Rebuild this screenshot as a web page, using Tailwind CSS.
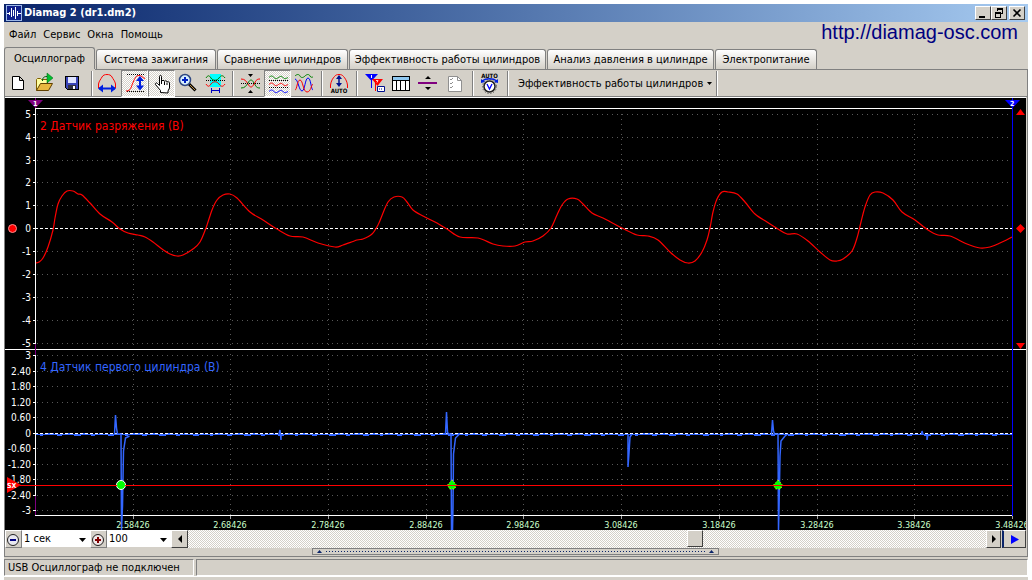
<!DOCTYPE html>
<html lang="ru">
<head>
    <meta charset="UTF-8">
    <meta name="viewport" content="width=device-width, initial-scale=1.0">
    <title>Diamag 2 (dr1.dm2)</title>
    <script src="https://cdn.jsdelivr.net/npm/@tailwindcss/browser@4"></script>
</head>
<body class="bg-white pt-1 text-[11px] leading-[14px] text-black font-['DejaVu_Sans_Condensed','DejaVu_Sans',sans-serif]">

    <div class="mx-1 bg-[#d4d0c8]">

        <!-- Title bar -->
        <header class="flex h-[18px] items-center bg-linear-to-r from-[#0a246a] to-[#a6caf0] pl-0.5 pr-[3px]">
            <svg class="size-4" viewBox="0 0 16 16" fill="none">
                <rect x=".5" y=".5" width="15" height="15" fill="#10208c" stroke="#9db8e8"/>
                <path d="M1 8.500h2M3.500 7v3M5.500 3v9M7.500 5v6M9.500 2v12M11.500 6v5M12 8.500h3" stroke="#fff"/>
            </svg>
            <h1 class="ml-0.5 flex-1 font-bold text-white">Diamag 2 (dr1.dm2)</h1>
            <button aria-label="Свернуть" class="h-3.5 w-4 border border-t-white border-l-white border-r-[#404040] border-b-[#404040] bg-[#d4d0c8]">
                <svg class="h-3 w-3.5" viewBox="0 0 14 12"><path d="M3 9h6v2H3z"/></svg>
            </button>
            <button aria-label="Восстановить" class="h-3.5 w-4 border border-t-white border-l-white border-r-[#404040] border-b-[#404040] bg-[#d4d0c8]">
                <svg class="h-3 w-3.5" viewBox="0 0 14 12" fill="none" stroke="#000" shape-rendering="crispEdges"><path d="M5.500 4V1.500h5v5H9M5 2h6M3.500 5.500h5v5h-5zM3 6h6"/></svg>
            </button>
            <button aria-label="Закрыть" class="ml-0.5 h-3.5 w-4 border border-t-white border-l-white border-r-[#404040] border-b-[#404040] bg-[#d4d0c8]">
                <svg class="h-3 w-3.5" viewBox="0 0 14 12"><path d="M3.500 2.500l7 7m0-7l-7 7" stroke="#000" stroke-width="1.600"/></svg>
            </button>
        </header>

        <!-- Menu -->
        <div class="flex h-[25px] items-start justify-between pl-[5px] pr-2.5">
            <nav class="flex gap-[7px] pt-1.5">
                <button>Файл</button>
                <button>Сервис</button>
                <button>Окна</button>
                <button>Помощь</button>
            </nav>
            <a href="http://diamag-osc.com" class="font-['Liberation_Sans',sans-serif] text-xl leading-5 text-[#000080]">http://diamag-osc.com</a>
        </div>

        <!-- Tabs -->
        <div class="flex h-[22px] items-end gap-px whitespace-nowrap" role="tablist">
            <button role="tab" aria-selected="true" class="h-[22px] w-[91px] rounded-t-[3px] border border-b-0 border-[#808080] bg-[#d4d0c8]">Осциллограф</button>
            <button role="tab" class="h-5 w-[120px] rounded-t-[3px] border border-b-0 border-[#808080] bg-linear-to-b from-white to-[#d4d0c8]">Система зажигания</button>
            <button role="tab" class="h-5 w-[131px] rounded-t-[3px] border border-b-0 border-[#808080] bg-linear-to-b from-white to-[#d4d0c8]">Сравнение цилиндров</button>
            <button role="tab" class="h-5 w-[197px] rounded-t-[3px] border border-b-0 border-[#808080] bg-linear-to-b from-white to-[#d4d0c8]">Эффективность работы цилиндров</button>
            <button role="tab" class="h-5 w-[167px] rounded-t-[3px] border border-b-0 border-[#808080] bg-linear-to-b from-white to-[#d4d0c8]">Анализ давления в цилиндре</button>
            <button role="tab" class="h-5 w-[102px] rounded-t-[3px] border border-b-0 border-[#808080] bg-linear-to-b from-white to-[#d4d0c8]">Электропитание</button>
        </div>

        <main class="border-x border-[#808080]">
            <div class="ml-[90px] h-px bg-[#808080]"></div>

            <!-- Toolbar -->
            <div class="flex h-[27px] items-start border-b border-[#808080]" role="toolbar">
                <button aria-label="Новый"><svg class="size-[27px]" viewBox="0 0 27 27"><path d="M7.500 6.500h7l4 4v9h-11zM14.500 6.500v4h4" fill="#fff" stroke="#000"/></svg></button>
                <button aria-label="Открыть"><svg class="size-[27px]" viewBox="0 0 27 27">
                    <path d="M4.500 20.500v-11l1-1h3l1 1h6v4" fill="#ffffa0" stroke="#806000"/>
                    <path d="M4.500 20.500l4-7h12l-4 7z" fill="#e8b840" stroke="#604000"/>
                    <path d="M15 3l6 5-6 5z" fill="#00c030" stroke="#006010" stroke-width=".5"/><path d="M10.500 11c0-3 1-4.500 4.500-4.500" fill="none" stroke="#006010"/>
                </svg></button>
                <button aria-label="Сохранить"><svg class="size-[27px]" viewBox="0 0 27 27" shape-rendering="crispEdges">
                    <path d="M6 6h14v14H8l-2-2z" fill="#000"/><path d="M7 7h12v12H8l-1-1z" fill="#3a45b8"/>
                    <path d="M9 7h8v6H9z" fill="#dfe4ff"/><path d="M9 15h8v4H9z" fill="#303040"/><path d="M14 16h2v3h-2z" fill="#fff"/>
                </svg></button>
                <div class="ml-[5px] mr-px mt-px h-[25px] w-0.5 border-l border-[#808080] border-r border-r-white"></div>
                <button aria-label="Растянуть по горизонтали"><svg class="size-[27px]" viewBox="0 0 27 27" fill="none">
                    <path d="M4.500 18v-4C5 11 7 9 8 7c1-2 3-2.500 5-2.500s4 .5 5 2.500c1 2 3 4 3.500 7v4" stroke="#f00"/>
                    <path d="M5 18.500h16" stroke="#0020e0" stroke-width="2"/><path d="M4 18.500l5-4v8zM22 18.500l-5-4v8z" fill="#0020e0"/>
                </svg></button>
                <button aria-label="Растянуть по вертикали" aria-pressed="true" class="size-[27px] border border-t-[#808080] border-l-[#808080] border-r-white border-b-white bg-[repeating-conic-gradient(#fff_0_25%,#d4d0c8_0_50%)] bg-[length:2px_2px]"><svg class="size-[25px]" viewBox="1 1 25 25" fill="none">
                    <path d="M6 4.500h18M6 21.500h18" stroke="#000" stroke-dasharray="1 1"/>
                    <path d="M5 21c5 0 5-4 7-8.500s3-7 6-7 3 2 6 3" stroke="#f00"/>
                    <path d="M19 9v8" stroke="#0020e0" stroke-width="2"/><path d="M19 6l4 5h-8zM19 20.500l4-5h-8z" fill="#0020e0"/>
                </svg></button>
                <button aria-label="Рука" aria-pressed="true" class="size-[27px] border border-t-[#808080] border-l-[#808080] border-r-white border-b-white bg-[repeating-conic-gradient(#fff_0_25%,#d4d0c8_0_50%)] bg-[length:2px_2px]"><svg class="size-[25px]" viewBox="1 1 25 25">
                    <path d="M12.500 22.500v-2l-5-6c-.5-2 1-2 2-1l2 2v-9c0-1.500 2-1.500 2 0v5c0-1.500 3-1.500 3 0 0-1 2.500-1 2.500.5 0-.5 2.500-.5 2.500 1v5l-1.500 3v2z" fill="#fff" stroke="#000"/>
                    <path d="M13.500 11v3M16.500 12v3M19 12.500v2.500" stroke="#000"/>
                </svg></button>
                <button aria-label="Масштаб"><svg class="size-[27px]" viewBox="0 0 27 27">
                    <path d="M14 14l6.500 6.500" stroke="#000" stroke-width="3"/><path d="M15 15l5 5" stroke="#c09040"/>
                    <circle cx="10" cy="10" r="5.500" fill="#d8f0ff" stroke="#304880" stroke-width="1.500"/>
                    <path d="M7 10h6M10 7v6" stroke="#0020c0" stroke-width="2"/>
                </svg></button>
                <button aria-label="Выделенный участок"><svg class="size-[27px]" viewBox="0 0 27 27" fill="none">
                    <path d="M8 4h11v13H8z" fill="#00ffff"/>
                    <path d="M4 8c2-3 3-3 5 0s6 3 8 0 4-3 6 0" stroke="#008000"/>
                    <path d="M4 14c2 3 3 3 5 0s6-3 8 0 4 3 6 0" stroke="#f00"/>
                    <path d="M4 10.500h19" stroke="#000" stroke-dasharray="1 1"/>
                    <path d="M9.500 18v5M17.500 18v5M10 20.500h7" stroke="#0000c0"/>
                </svg></button>
                <div class="mx-[3px] mt-px h-[25px] w-0.5 border-l border-[#808080] border-r border-r-white"></div>
                <button aria-label="Совместить"><svg class="size-[27px]" viewBox="0 0 27 27" fill="none">
                    <path d="M11 4h5l-2.500 3zM11 23h5l-2.500-3z" fill="#000"/>
                    <path d="M4 18c4 0 5-2 7-5 2-4 4-4 6 0 2 3 2 5 6 5" stroke="#008000"/>
                    <path d="M4 9c4 0 5 2 7 5 2 4 4 4 6 0 2-3 2-5 6-5" stroke="#f00"/>
                    <path d="M4 13.500h19" stroke="#000" stroke-dasharray="1 1"/>
                </svg></button>
                <button aria-label="Раздельно" aria-pressed="true" class="size-[27px] border border-t-[#808080] border-l-[#808080] border-r-white border-b-white bg-[repeating-conic-gradient(#fff_0_25%,#d4d0c8_0_50%)] bg-[length:2px_2px]"><svg class="size-[25px]" viewBox="1 1 25 25" fill="none">
                    <path d="M5 7.500c2-2 3-2 5 0s3 1 4.500 0 3-2 4.500 0 3 1 5 0" stroke="#008000"/>
                    <path d="M5 14.500c2-2 3-2 5 0s3 1 4.500 0 3-2 4.500 0 3 1 5 0" stroke="#f00"/>
                    <path d="M5 21.500c2-2 3-2 5 0s3 1 4.500 0 3-2 4.500 0 3 1 5 0" stroke="#00f"/>
                    <path d="M5 10.500h19M5 17.500h19" stroke="#000" stroke-dasharray="1 1"/>
                </svg></button>
                <button aria-label="Наложить"><svg class="size-[27px]" viewBox="0 0 27 27" fill="none">
                    <path d="M4 6c2-2 4-2 5 0s3 2 5 0 4-2 5 0 2 1 3 1" stroke="#008000"/>
                    <path d="M4 9c3 0 4 12 7 12s3-13 6-13 3 12 5 12" stroke="#00f"/>
                    <path d="M4 20c2 0 2-10 5-10s3 12 7 12 4-7 6-8" stroke="#f00"/>
                </svg></button>
                <div class="mx-[3px] mt-px h-[25px] w-0.5 border-l border-[#808080] border-r border-r-white"></div>
                <button aria-label="Авто усиление"><svg class="size-[27px]" viewBox="0 0 27 27" fill="none">
                    <path d="M4.500 18v-3C5 11 7 8 8.500 6.500c1-1.500 2.500-2 4.500-2s3.500.5 4.500 2C19 8 21 11 21.500 15v3" stroke="#f00"/>
                    <path d="M13 6v9" stroke="#001090" stroke-width="1.500"/><path d="M13 5l3 4h-6zM13 17l3-4h-6z" fill="#001090"/>
                    <text x="13" y="23" text-anchor="middle" font-size="6" font-weight="bold" fill="#000">AUTO</text>
                </svg></button>
                <div class="mx-[3px] mt-px h-[25px] w-0.5 border-l border-[#808080] border-r border-r-white"></div>
                <button aria-label="Маркеры"><svg class="size-[27px]" viewBox="0 0 27 27" fill="none">
                    <path d="M4 4h13l-6.500 7z" fill="#00f"/><path d="M10.500 9v9" stroke="#00f"/>
                    <path d="M11 9h11l-5.500 7z" fill="#f00"/><path d="M14.500 12v9" stroke="#f00"/>
                    <path d="M10.500 5v3" stroke="#fff"/><path d="M15 10.500h2l-1 2" stroke="#fff" stroke-width=".8"/>
                    <path d="M16.500 16.500h7v5h-7z" fill="#fff" stroke="#001090"/><path d="M18 19h4" stroke="#001090" stroke-dasharray="1 1"/>
                </svg></button>
                <button aria-label="Таблица"><svg class="size-[27px]" viewBox="0 0 27 27" shape-rendering="crispEdges">
                    <path d="M4.500 6.500h17v14h-17z" fill="#fff"/><path d="M5 7h16v3H5z" fill="#90c8f0"/>
                    <path d="M4.500 6.500h17v14h-17zM4.500 10.500h17M8.500 10v10M12.500 10v10M17.500 10v10" fill="none" stroke="#000"/>
                </svg></button>
                <button aria-label="Разделитель"><svg class="size-[27px]" viewBox="0 0 27 27">
                    <path d="M3 12h19v2H3z" fill="#800080"/><path d="M10 9h6l-3-3zM10 17h6l-3 3z"/>
                </svg></button>
                <button aria-label="Отчёт"><svg class="size-[27px]" viewBox="0 0 27 27" fill="none" stroke="#909090">
                    <path d="M6.500 6.500h9l4 4v11h-13z" fill="#fff"/><path d="M15.500 6.500v4h4"/>
                    <path d="M8 9l1 1 2-2M8 13l1 1 2-2M8 17l1 1 2-2"/>
                </svg></button>
                <div class="mx-[3px] mt-px h-[25px] w-0.5 border-l border-[#808080] border-r border-r-white"></div>
                <button aria-label="Авто синхронизация"><svg class="size-[27px]" viewBox="0 0 27 27" fill="none">
                    <text x="12.500" y="8" text-anchor="middle" font-size="6" font-weight="bold" fill="#000">AUTO</text>
                    <circle cx="12.500" cy="16.500" r="5.500" fill="#fff" stroke="#202020" stroke-width="1.500"/>
                    <circle cx="12.500" cy="16.500" r="7" stroke="#404040" stroke-dasharray="1 2"/>
                    <path d="M10 14l2.500 5 2.500-5" stroke="#00f" stroke-width="1.300"/>
                    <path d="M5 11c4-3 11-3 15 0" stroke="#0020e0" stroke-width="1.500"/><path d="M4 13V9l4 3zM21 13V9l-4 3z" fill="#0020e0"/>
                </svg></button>
                <div class="mx-[3px] mt-px h-[25px] w-0.5 border-l border-[#808080] border-r border-r-white"></div>
                <button class="flex h-[27px] items-center gap-1 pl-1.5 whitespace-nowrap">
                    Эффективность работы цилиндров
                    <svg class="h-[3px] w-[5px]" viewBox="0 0 5 3"><path d="M0 0h5L2.500 3z"/></svg>
                </button>
                <div class="ml-1 mt-px h-[25px] w-0.5 border-l border-[#808080] border-r border-r-white"></div>
            </div>

            <div class="mr-px border-t border-white">
                <!-- Oscilloscope screen -->
                <svg id="scope" class="block w-full bg-black" viewBox="5 98 1021 432" fill="none" role="img" aria-label="Осциллограмма">
                    <g id="grid" stroke="#585858" stroke-dasharray="1 4" shape-rendering="crispEdges"></g>

                    <g shape-rendering="crispEdges">
                        <path d="M35 108.500h977M5 349.500h1021M35 515.500h977" stroke="#fff"/>
                        <path d="M35.500 108v408" stroke="#fff"/>
                        <path d="M35.500 98v10M35.500 343v12M35.500 495v20" stroke="#800080"/>
                        <path d="M36 434.500h976" stroke="#3366ff"/>
                        <path id="noise" stroke="#3366ff"/>
                        <path d="M35 228.500h977M35 433.500h977" stroke="#fff" stroke-dasharray="3 2"/>
                    </g>

                    <path id="vacuum" stroke="#f00" stroke-width="1.200"/>
                    <path stroke="#3366ff" stroke-width="1.500" d="M114.500 434l1-19 1 13 1 6h3.500l.5 96 1-24 1-55 2-13 4-2
                        M279 434l1-4 1 10v-6
                        M445.500 434l1-22 1 20 1 2h2.500l.5 96h1l.5-22 .5-54 2-16 4-4
                        M628 434v33l1-14 1-16 2-3
                        M771.500 434l1-14 1 11 1 3h3.500l.5 96 .5-20 1-54 1-15 4-5 3-2
                        M921.500 434l.5-3 1 3M927 434v6l1-6"/>

                    <!-- Trigger level -->
                    <circle cx="121" cy="485" r="4.500" fill="#0f0" stroke="#fff"/>
                    <path d="M452 480l4.500 5-2 4h-5l-2-4zM778 480l4.500 5-2 4h-5l-2-4z" fill="#0f0" stroke="#ff0" stroke-dasharray="1 2"/>
                    <path d="M20 485.500h97M125 485.500h887" stroke="#f00" shape-rendering="crispEdges"/>

                    <g id="labels" class="fill-white"></g>
                    <g id="times" class="fill-[#ccffcc]"></g>

                    <path d="M7 477l14 8-14 8z" fill="#f00"/>
                    <text x="7" y="488" class="fill-white text-[7px] font-bold">SX</text>
                    <text x="40" y="130" class="fill-[#ff0000] text-[12px]">2 Датчик разряжения (В)</text>
                    <text x="40" y="371" class="fill-[#3366ff] text-[12px]">4 Датчик первого цилиндра (В)</text>

                    <!-- Range markers -->
                    <path d="M1012.500 98v418" stroke="#00f" shape-rendering="crispEdges"/>
                    <path d="M28 100h15l-7.500 8z" fill="#800080"/>
                    <text x="33" y="106" class="fill-white text-[7px] font-bold">1</text>
                    <path d="M1005 100h15l-7.500 8z" fill="#00f"/>
                    <text x="1010" y="106" class="fill-white text-[7px] font-bold">2</text>
                    <circle cx="12.500" cy="228.500" r="4" fill="#f00" stroke="#ff9090"/>
                    <path d="M1016 115h9l-4.500-6zM1020.500 224l4.500 4.500-4.500 4.500-4.500-4.500zM1016 343h9l-4.500 6z" fill="#f00"/>
                </svg>

                <!-- Timebase and scroll -->
                <div class="flex h-[18px] bg-[#d4d0c8]">
                    <button aria-label="Уменьшить" class="w-[17px] border border-t-white border-l-white border-r-[#808080] border-b-[#808080]"><svg class="size-[15px]" viewBox="0 0 15 15"><circle cx="7" cy="8" r="5.500" fill="#e8e8f0" stroke="#202020"/><path d="M4 7h6v2H4z" fill="#000080"/></svg></button>
                    <div class="relative w-[68px]">
                        <select aria-label="Развёртка" class="block h-[17px] w-full appearance-none bg-white pl-0.5 text-[11px] leading-[14px]"><option>1 сек</option></select>
                        <svg class="pointer-events-none absolute right-1 top-2 h-1 w-[7px]" viewBox="0 0 7 4"><path d="M0 0h7L3.500 4z"/></svg>
                    </div>
                    <button aria-label="Увеличить" class="w-[17px] border border-t-white border-l-white border-r-[#808080] border-b-[#808080]"><svg class="size-[15px]" viewBox="0 0 15 15"><circle cx="7" cy="8" r="5.500" fill="#f0e8e8" stroke="#202020"/><path d="M4 7h2V5h2v2h2v2H8v2H6V9H4z" fill="#800000"/></svg></button>
                    <div class="relative w-[64px]">
                        <select aria-label="Масштаб" class="block h-[17px] w-full appearance-none bg-white pl-0.5 text-[11px] leading-[14px]"><option>100</option></select>
                        <svg class="pointer-events-none absolute right-1 top-2 h-1 w-[7px]" viewBox="0 0 7 4"><path d="M0 0h7L3.500 4z"/></svg>
                    </div>
                    <button aria-label="Назад" class="w-[17px] border border-t-white border-l-white border-r-[#404040] border-b-[#404040]"><svg class="h-4 w-[15px]" viewBox="0 0 15 16"><path d="M10 4v8L6 8z"/></svg></button>
                    <div class="flex flex-1 bg-[repeating-conic-gradient(#fff_0_25%,#d4d0c8_0_50%)] bg-[length:2px_2px]">
                        <div class="flex-[499]"></div>
                        <div class="h-[17px] w-4 border border-t-white border-l-white border-r-[#404040] border-b-[#404040] bg-[#d4d0c8]" role="scrollbar" aria-controls="scope" aria-valuenow="64"></div>
                        <div class="flex-[283]"></div>
                    </div>
                    <button aria-label="Вперёд" class="w-[15px] border border-t-white border-l-white border-r-[#404040] border-b-[#404040]"><svg class="h-4 w-[13px]" viewBox="0 0 13 16"><path d="M5 4v8l4-4z"/></svg></button>
                    <button aria-label="Воспроизвести" class="ml-px w-6 border border-l-2 border-t-white border-l-[#0a246a] border-r-[#404040] border-b-[#404040]"><svg class="h-4 w-[21px]" viewBox="0 0 21 16"><path d="M7 4v9l8-4.500z" fill="#00f"/></svg></button>
                </div>

                <!-- Splitter -->
                <div class="mx-[307px] flex h-[7px] items-center gap-1 border border-[#808080] px-1">
                    <svg class="h-[3px] w-[5px]" viewBox="0 0 5 3"><path d="M0 3h5L2.500 0z" fill="#0a246a"/></svg>
                    <div class="h-px flex-1 bg-[repeating-linear-gradient(90deg,#0a246a_0_1px,transparent_1px_3px)]"></div>
                    <svg class="h-[3px] w-[5px]" viewBox="0 0 5 3"><path d="M0 3h5L2.500 0z" fill="#0a246a"/></svg>
                </div>
            </div>
            <div class="h-0.5 border-b border-[#808080]"></div>
        </main>

        <!-- Status bar -->
        <footer class="flex gap-0.5 border-b border-white pt-0.5">
            <div class="h-[17px] w-[190px] border border-t-[#808080] border-l-[#808080] border-r-white border-b-white pl-[3px] leading-4">USB Осциллограф не подключен</div>
            <div class="h-[17px] flex-1 border border-t-[#808080] border-l-[#808080] border-r-white border-b-white"></div>
        </footer>
        <div class="mt-px h-[3px]"></div>
    </div>

    <script>
        const vacuum = [
            [36,263],[39,262],[43,258],[48,247],[53,230],[55,218],[58,204],[62,196],[67,191],[73,191],[78,194],[82,195],[90,203],
            [100,214],[112,222],[120,229],[128,233],[138,235],[145,237],[153,242],[162,249],[170,254],[177,256],[183,255],
            [193,249],[200,242],[206,228],[212,210],[217,200],[223,195],[230,194],[237,198],[250,212],[263,220],[277,229],
            [290,236],[303,237],[318,243],[335,247],[343,245],[357,240],[363,239],[372,234],[378,225],[383,213],[388,202],
            [394,197],[402,197],[407,202],[413,210],[423,216],[435,222],[447,229],[460,237],[478,238],[493,244],[503,246],
            [515,246],[525,242],[533,241],[543,236],[551,228],[557,215],[562,205],[568,199],[577,199],[583,204],[592,213],
            [603,218],[622,228],[637,235],[648,236],[658,240],[670,252],[680,260],[688,263],[695,261],[702,252],[707,240],
            [710,228],[713,212],[717,199],[722,192],[728,192],[737,194],[745,202],[755,214],[767,222],[778,229],[787,234],
            [797,234],[808,241],[820,252],[830,260],[837,261],[843,259],[852,251],[857,238],[861,222],[865,207],[870,195],
            [875,192],[883,193],[893,200],[902,212],[915,220],[928,230],[938,235],[950,236],[967,244],[980,248],[990,247],
            [1000,243],[1012,237]
        ];
        const rows1 = [114,137,160,182,205,228,251,274,297,320,343];
        const names1 = ['5','4','3','2','1','0','-1','-2','-3','-4','-5'];
        const rows2 = [355,371,386,402,417,433,448,464,479,495,510];
        const names2 = ['3','2.40','1.80','1.20','0.60','0','-0.60','-1.20','-1.80','-2.40','-3'];
        const cols = [133,230,328,426,523,621,719,817,914,1012];

        // Smooth curve through the samples (Catmull-Rom)
        function curve(p) {
            let d = `M${p[0]}`;
            for (let i = 0; i < p.length - 1; i++) {
                const a = p[i - 1] || p[i], b = p[i], c = p[i + 1], e = p[i + 2] || c;
                d += `C${b[0] + (c[0] - a[0]) / 6} ${b[1] + (c[1] - a[1]) / 6} ${c[0] - (e[0] - b[0]) / 6} ${c[1] - (e[1] - b[1]) / 6} ${c}`;
            }
            return d;
        }
        document.getElementById('vacuum').setAttribute('d', curve(vacuum));

        let grid = '', labels = '', times = '', noise = '';
        rows1.concat(rows2).forEach((y, i) => {
            const name = names1.concat(names2)[i];
            grid += `<path d="M37 ${y + 0.5}H1012"/>`;
            labels += `<path d="M33 ${y + 0.5}h3" stroke="#fff" shape-rendering="crispEdges"/>`;
            labels += `<text x="31" y="${y + 4}" text-anchor="end" class="text-[10px]">${name}</text>`;
        });
        cols.forEach((x, i) => {
            grid += `<path d="M${x + 0.5} 114V515"/>`;
            times += `<path d="M${x + 0.5} 516v3" stroke="#a0a0a0" shape-rendering="crispEdges"/>`;
            times += `<text x="${x}" y="528" text-anchor="middle" class="text-[9px]">${(2.58426 + i / 10).toFixed(5)}</text>`;
        });
        for (let x = 40; x < 1005; x += 17) {
            noise += `M${x} 435.500h${3 + x % 5}M${x + 8} 433.500h${2 + x % 6}`;
        }
        document.getElementById('grid').innerHTML = grid;
        document.getElementById('labels').innerHTML = labels;
        document.getElementById('times').innerHTML = times;
        document.getElementById('noise').setAttribute('d', noise);
    </script>
</body>
</html>
